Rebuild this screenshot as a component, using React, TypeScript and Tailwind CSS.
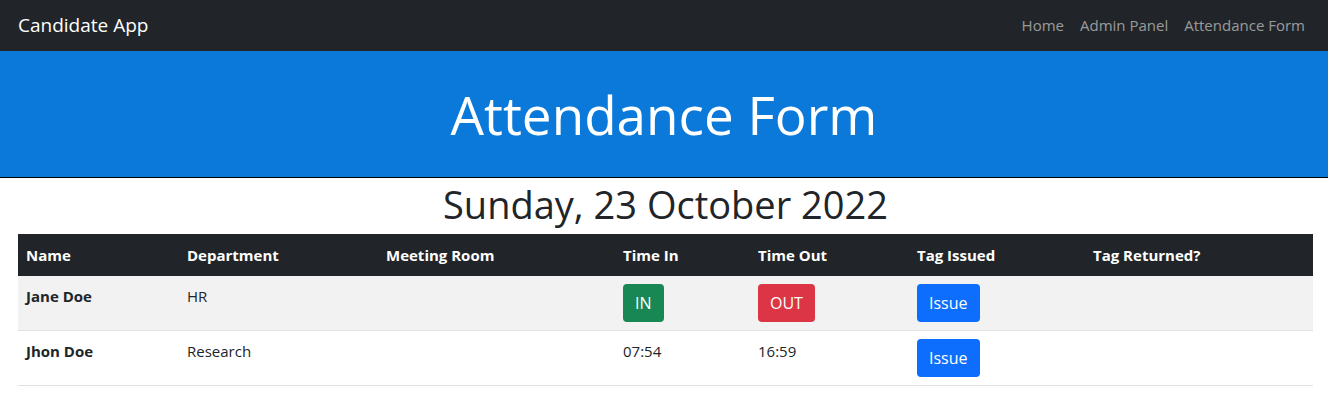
const rows = [
  { name: 'Jane Doe', dept: 'HR', room: '', timeIn: null, timeOut: null },
  { name: 'Jhon Doe', dept: 'Research', room: '', timeIn: '07:54', timeOut: '16:59' },
];

const cols = [
  { label: 'Name', w: 'w-[161px]' },
  { label: 'Department', w: 'w-[199px]' },
  { label: 'Meeting Room', w: 'w-[237px]' },
  { label: 'Time In', w: 'w-[135px]' },
  { label: 'Time Out', w: 'w-[159px]' },
  { label: 'Tag Issued', w: 'w-[176px]' },
  { label: 'Tag Returned?', w: '' },
];

export default function App() {
  return (
    <div className="min-h-screen bg-white text-[#212529] font-['Open_Sans',sans-serif]">
      <nav className="flex h-[51px] items-center justify-between bg-[#212529] px-[15px]">
        <a className="ml-[3px] text-[19px] text-white">Candidate App</a>
        <ul className="flex text-[15px] text-[rgba(255,255,255,0.55)]">
          <li className="px-2">Home</li>
          <li className="px-2">Admin Panel</li>
          <li className="px-2">Attendance Form</li>
        </ul>
      </nav>

      <header className="flex h-[127px] items-center justify-center border-b border-black bg-[#0b79d9]">
        <h1 className="text-[53px] font-normal leading-none text-white">Attendance Form</h1>
      </header>

      <div className="pl-[18px] pr-[15px] pb-4">
        <h2 className="pt-[3px] pb-[6px] text-center text-[38px] font-normal leading-[47px]">
          Sunday, 23 October 2022
        </h2>
        <table className="w-full border-collapse text-left text-[15px]">
          <thead>
            <tr className="bg-[#212529] text-white">
              {cols.map((c) => (
                <th key={c.label} className={`${c.w} h-[42px] px-2 font-bold`}>
                  {c.label}
                </th>
              ))}
            </tr>
          </thead>
          <tbody>
            {rows.map((r, i) => (
              <tr
                key={r.name}
                className={`border-b border-[#dee2e6] align-top ${i === 0 ? 'bg-[#f2f2f2]' : 'bg-white'}`}
              >
                <td className="h-[54px] p-2 pt-[9px] font-bold">{r.name}</td>
                <td className="p-2 pt-[9px]">{r.dept}</td>
                <td className="p-2 pt-[9px]">{r.room}</td>
                <td className="p-2">
                  {r.timeIn ? (
                    <span className="block pt-[1px]">{r.timeIn}</span>
                  ) : (
                    <button className="h-[38px] rounded-[4px] bg-[#198754] px-3 text-[16px] text-white">IN</button>
                  )}
                </td>
                <td className="p-2">
                  {r.timeOut ? (
                    <span className="block pt-[1px]">{r.timeOut}</span>
                  ) : (
                    <button className="h-[38px] rounded-[4px] bg-[#dc3545] px-3 text-[16px] text-white">OUT</button>
                  )}
                </td>
                <td className="p-2">
                  <button className="h-[38px] rounded-[4px] bg-[#0d6efd] px-3 text-[16px] text-white">Issue</button>
                </td>
                <td className="p-2"></td>
              </tr>
            ))}
          </tbody>
        </table>
      </div>
    </div>
  );
}
